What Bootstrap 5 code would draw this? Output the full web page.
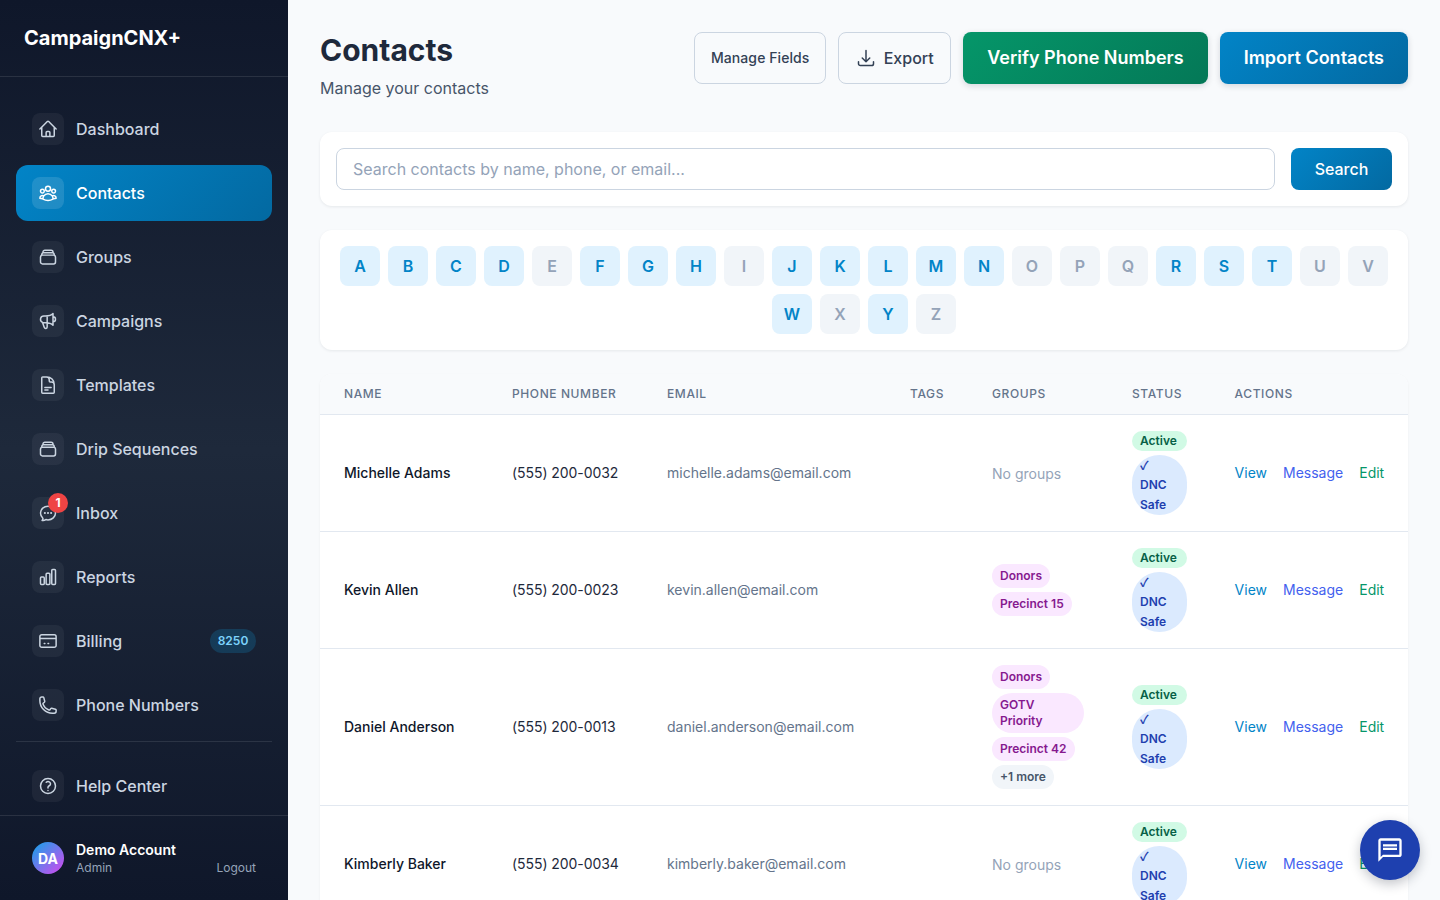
<!doctype html>
<html lang="en">
<head>
<meta charset="utf-8">
<title>Contacts</title>
<link rel="stylesheet" href="https://cdn.jsdelivr.net/npm/bootstrap@5.3.0/dist/css/bootstrap.min.css">
<style>
html,body{height:100%;overflow:hidden}
body{font-family:Inter,"Liberation Sans",sans-serif;background:#f8fafc;color:#0f172a}
.shell{height:100vh}
.side{width:288px;flex:none;height:100vh;background:linear-gradient(180deg,#0f172a 0%,#1e293b 50%,#0f172a 100%)}
.brand{height:77px;padding:0 24px;border-bottom:1px solid rgba(255,255,255,.1);font-size:20px;font-weight:700;color:#fff;line-height:76px;flex:none}
.sidenav{padding:24px 16px 0;flex:none}
.sitem{height:56px;margin-bottom:8px;padding:12px 16px;border-radius:12px;color:#cbd5e1;font-size:16px;font-weight:500;text-decoration:none;gap:12px}
.sitem:hover{color:#cbd5e1}
.sitem:last-child{margin-bottom:0}
.sitem.on{color:#fff;background:linear-gradient(135deg,#0284c7,#0369a1)}
.sico{width:32px;height:32px;border-radius:8px;background:rgba(255,255,255,.05);flex:none}
.on .sico{background:rgba(255,255,255,.12)}
.sico svg{width:20px;height:20px;fill:none;stroke:#cbd5e1;stroke-width:1.8;stroke-linecap:round;stroke-linejoin:round}
.on .sico svg{stroke:#fff}
.redot{top:-4px;right:-4px;width:20px;height:20px;border-radius:50%;background:#ef4444;color:#fff;font-size:12px;font-weight:700;line-height:20px;text-align:center}
.credit{width:46px;height:24px;border-radius:12px;background:rgba(14,165,233,.2);color:#7dd3fc;font-size:12px;font-weight:600;line-height:24px;text-align:center;flex:none}
.sdiv{height:1px;background:rgba(255,255,255,.1);margin-bottom:16px}
.sfoot{height:85px;flex:none;border-top:1px solid rgba(255,255,255,.1);padding:0 32px;gap:12px}
.avatar{width:32px;height:32px;border-radius:50%;background:linear-gradient(135deg,#0ea5e9,#d946ef);color:#fff;font-size:14px;font-weight:700;flex:none}
.uwrap{padding-top:2px}
.uname{font-size:14px;font-weight:600;color:#fff;line-height:18px}
.urole{font-size:12px;color:#94a3b8;line-height:18px}
.logout{font-size:12px;color:#94a3b8;text-decoration:none;line-height:18px;margin-top:20px}
.mainpane{height:100vh;overflow:hidden;padding:32px;min-width:0}
.pagehead{margin-bottom:48px;height:52px}
.pagehead h1{font-size:30px;font-weight:700;color:#1e293b;line-height:36px;margin:0 0 8px}
.pagehead p{font-size:16px;color:#475569;line-height:24px;margin:0}
.hgap{gap:12px}
.bt{height:52px;border-radius:8px;padding:0 24px 2px;font-weight:600;font-size:18px;border:0;color:#fff;white-space:nowrap}
.bt:hover{color:#fff}
.bt-blue{background:linear-gradient(135deg,#0284c7,#0369a1);box-shadow:0 2px 6px rgba(15,23,42,.15)}
.bt-green{background:linear-gradient(135deg,#059669,#047857);box-shadow:0 2px 6px rgba(15,23,42,.15)}
.bt-line{background:transparent;border:1px solid #cbd5e1;color:#334155;padding:0 16px;font-weight:500;font-size:16px}
.bt-line:hover{color:#334155}
.bt-sm14{font-size:14px;width:132px;letter-spacing:.08px;padding:0 0 2px}
.bt-exp{width:113px;padding:0}
.bt-line svg{width:20px;height:20px;fill:none;stroke:#334155;stroke-width:1.8;stroke-linecap:round;stroke-linejoin:round}
.panel{background:#fff;border-radius:12px;box-shadow:0 1px 3px rgba(15,23,42,.08);padding:16px}
.searchbox{height:42px;border:1px solid #cbd5e1;border-radius:8px;font-size:16px;padding:0 16px;color:#0f172a}
.searchbox::placeholder{color:#94a3b8}
.bt-search{height:42px;font-size:16px;font-weight:500;width:101px;padding:0;flex:none;box-shadow:none}
.alpha{margin-top:24px}
.ltr{width:40px;height:40px;border-radius:8px;font-size:16px;font-weight:600;background:#e0f2fe;color:#0284c7;text-decoration:none}
.ltr:hover{color:#0284c7}
.ltr.off{background:#f1f5f9;color:#94a3b8}
.tblcard{margin-top:24px;padding:0;background:#fff;border-radius:12px;box-shadow:0 1px 3px rgba(15,23,42,.05)}
.ctable{table-layout:fixed;width:1088px;margin:0;font-size:14px}
.ctable>thead>tr>th{height:40px;padding:0 24px;background:#f8fafc;border-bottom:1px solid #e2e8f0;font-size:12px;font-weight:500;letter-spacing:.6px;text-transform:uppercase;color:#64748b;vertical-align:middle;white-space:nowrap}
.ctable>thead>tr>th:first-child{border-top-left-radius:12px}
.ctable>thead>tr>th:last-child{border-top-right-radius:12px}
.ctable>tbody>tr>td{padding:16px 24px;border-bottom:1px solid #e2e8f0;vertical-align:middle;color:#334155;background:transparent}
.c1{width:168px}.c2{width:155px}.c3{width:243px}.c4{width:82px}.c5{width:140px}.c6{width:102.6px}.c7{width:197.4px}
.ctable>tbody>tr>td.nm{color:#0f172a;font-weight:500}
.ctable>tbody>tr>td.ph{color:#1e293b;white-space:nowrap;letter-spacing:-.06px}
.ctable>tbody>tr>td.em{color:#64748b}
.none{color:#94a3b8;display:block;padding-top:2px}
.pill{border-radius:9999px;font-size:12px;font-weight:600;padding:0 8px;display:block}
.p-act{background:#d1fae5;color:#065f46;line-height:20px}
.p-dnc{background:#dbeafe;color:#1e40af;line-height:20px}
.tick{display:block;height:20px;font-family:"Noto Sans CJK JP",sans-serif;font-weight:700;line-height:20px}
.p-grp{background:#fae8ff;color:#86198f;line-height:16px;padding:4px 8px;width:fit-content}
.p-more{background:#f1f5f9;color:#475569;line-height:16px;padding:4px 8px;width:fit-content}
.stack{display:flex;flex-direction:column;gap:4px}
.acts{gap:16px;white-space:nowrap}
.acts a{text-decoration:none}
.a-view{color:#0284c7}.a-msg{color:#4361ee}.a-edit{color:#059669}
.fab{right:20px;bottom:20px;width:60px;height:60px;border-radius:50%;background:#1e40af;box-shadow:0 4px 12px rgba(15,23,42,.25);border:0}
.fab svg{width:28px;height:28px;fill:#fff}
</style>
</head>
<body>
<div class="shell d-flex">
  <aside class="side d-flex flex-column">
    <div class="brand">CampaignCNX+</div>
    <nav class="sidenav">
      <a href="#" class="sitem d-flex align-items-center"><span class="sico d-flex align-items-center justify-content-center"><svg viewBox="0 0 24 24"><path d="M2.25 12l8.954-8.955c.44-.439 1.152-.439 1.591 0L21.75 12M4.5 9.75v10.125c0 .621.504 1.125 1.125 1.125H9.75v-4.875c0-.621.504-1.125 1.125-1.125h2.25c.621 0 1.125.504 1.125 1.125V21h4.125c.621 0 1.125-.504 1.125-1.125V9.75M8.25 21h8.25"/></svg></span>Dashboard</a>
      <a href="#" class="sitem on d-flex align-items-center"><span class="sico d-flex align-items-center justify-content-center"><svg viewBox="0 0 24 24"><path d="M18 18.72a9.094 9.094 0 003.741-.479 3 3 0 00-4.682-2.72m.94 3.198l.001.031c0 .225-.012.447-.037.666A11.944 11.944 0 0112 21c-2.17 0-4.207-.576-5.963-1.584A6.062 6.062 0 016 18.719m12 0a5.971 5.971 0 00-.941-3.197m0 0A5.995 5.995 0 0012 12.75a5.995 5.995 0 00-5.058 2.772m0 0a3 3 0 00-4.681 2.72 8.986 8.986 0 003.74.477m.94-3.197a5.971 5.971 0 00-.94 3.197M15 6.75a3 3 0 11-6 0 3 3 0 016 0zm6 3a2.25 2.25 0 11-4.5 0 2.25 2.25 0 014.5 0zm-13.5 0a2.25 2.25 0 11-4.5 0 2.25 2.25 0 014.5 0z"/></svg></span>Contacts</a>
      <a href="#" class="sitem d-flex align-items-center"><span class="sico d-flex align-items-center justify-content-center"><svg viewBox="0 0 24 24"><path d="M6 6.878V6a2.25 2.25 0 012.25-2.25h7.5A2.25 2.25 0 0118 6v.878m-12 0c.235-.083.487-.128.75-.128h10.5c.263 0 .515.045.75.128m-12 0A2.25 2.25 0 004.5 9v.878m13.5-3A2.25 2.25 0 0119.5 9v.878m0 0a2.246 2.246 0 00-.75-.128H5.25c-.263 0-.515.045-.75.128m15 0A2.25 2.25 0 0121 12v6a2.25 2.25 0 01-2.25 2.25H5.25A2.25 2.25 0 013 18v-6c0-.98.626-1.813 1.5-2.122"/></svg></span>Groups</a>
      <a href="#" class="sitem d-flex align-items-center"><span class="sico d-flex align-items-center justify-content-center"><svg viewBox="0 0 24 24"><path d="M11 5.882V19.24a1.76 1.76 0 01-3.417.592l-2.147-6.15M18 13a3 3 0 100-6M5.436 13.683A4.001 4.001 0 017 6h1.832c4.1 0 7.625-1.234 9.168-3v14c-1.543-1.766-5.067-3-9.168-3H7a3.988 3.988 0 00-1.564.317z"/></svg></span>Campaigns</a>
      <a href="#" class="sitem d-flex align-items-center"><span class="sico d-flex align-items-center justify-content-center"><svg viewBox="0 0 24 24"><path d="M19.5 14.25v-2.625a3.375 3.375 0 00-3.375-3.375h-1.5A1.125 1.125 0 0113.5 7.125v-1.5a3.375 3.375 0 00-3.375-3.375H8.25m0 12.75h7.5m-7.5 3H12M10.5 2.25H5.625c-.621 0-1.125.504-1.125 1.125v17.25c0 .621.504 1.125 1.125 1.125h12.75c.621 0 1.125-.504 1.125-1.125V11.25a9 9 0 00-9-9z"/></svg></span>Templates</a>
      <a href="#" class="sitem d-flex align-items-center"><span class="sico d-flex align-items-center justify-content-center"><svg viewBox="0 0 24 24"><path d="M6 6.878V6a2.25 2.25 0 012.25-2.25h7.5A2.25 2.25 0 0118 6v.878m-12 0c.235-.083.487-.128.75-.128h10.5c.263 0 .515.045.75.128m-12 0A2.25 2.25 0 004.5 9v.878m13.5-3A2.25 2.25 0 0119.5 9v.878m0 0a2.246 2.246 0 00-.75-.128H5.25c-.263 0-.515.045-.75.128m15 0A2.25 2.25 0 0121 12v6a2.25 2.25 0 01-2.25 2.25H5.25A2.25 2.25 0 013 18v-6c0-.98.626-1.813 1.5-2.122"/></svg></span>Drip Sequences</a>
      <a href="#" class="sitem d-flex align-items-center"><span class="sico position-relative d-flex align-items-center justify-content-center"><svg viewBox="0 0 24 24"><path d="M8.625 12a.375.375 0 11-.75 0 .375.375 0 01.75 0zm0 0H8.25m4.125 0a.375.375 0 11-.75 0 .375.375 0 01.75 0zm0 0H12m4.125 0a.375.375 0 11-.75 0 .375.375 0 01.75 0zm0 0h-.375M21 12c0 4.556-4.03 8.25-9 8.25a9.764 9.764 0 01-2.555-.337A5.972 5.972 0 015.41 20.97a5.969 5.969 0 01-.474-.065 4.48 4.48 0 00.978-2.025c.09-.457-.133-.901-.467-1.226C3.93 16.178 3 14.189 3 12c0-4.556 4.03-8.25 9-8.25s9 3.694 9 8.25z"/></svg><span class="redot position-absolute">1</span></span>Inbox</a>
      <a href="#" class="sitem d-flex align-items-center"><span class="sico d-flex align-items-center justify-content-center"><svg viewBox="0 0 24 24"><path d="M3 13.125C3 12.504 3.504 12 4.125 12h2.25c.621 0 1.125.504 1.125 1.125v6.75C7.5 20.496 6.996 21 6.375 21h-2.25A1.125 1.125 0 013 19.875v-6.75zM9.75 8.625c0-.621.504-1.125 1.125-1.125h2.25c.621 0 1.125.504 1.125 1.125v11.25c0 .621-.504 1.125-1.125 1.125h-2.25a1.125 1.125 0 01-1.125-1.125V8.625zM16.5 4.125c0-.621.504-1.125 1.125-1.125h2.25C20.496 3 21 3.504 21 4.125v15.75c0 .621-.504 1.125-1.125 1.125h-2.25a1.125 1.125 0 01-1.125-1.125V4.125z"/></svg></span>Reports</a>
      <a href="#" class="sitem d-flex align-items-center"><span class="sico d-flex align-items-center justify-content-center"><svg viewBox="0 0 24 24"><path d="M2.25 9h19.5M7.5 15h.75M12 15h.75M4.5 19.5h15a2.25 2.25 0 002.25-2.25V6.75A2.25 2.25 0 0019.5 4.5h-15a2.25 2.25 0 00-2.25 2.25v10.5A2.25 2.25 0 004.5 19.5z"/></svg></span><span class="flex-grow-1">Billing</span><span class="credit">8250</span></a>
      <a href="#" class="sitem d-flex align-items-center"><span class="sico d-flex align-items-center justify-content-center"><svg viewBox="0 0 24 24"><path d="M2.25 6.75c0 8.284 6.716 15 15 15h2.25a2.25 2.25 0 002.25-2.25v-1.372c0-.516-.351-.966-.852-1.091l-4.423-1.106c-.44-.11-.902.055-1.173.417l-.97 1.293c-.282.376-.769.542-1.21.38a12.035 12.035 0 01-7.143-7.143c-.162-.441.004-.928.38-1.21l1.293-.97c.363-.271.527-.734.417-1.173L6.963 3.102a1.125 1.125 0 00-1.091-.852H4.5A2.25 2.25 0 002.25 4.5v2.25z"/></svg></span>Phone Numbers</a>
      <div class="sdiv"></div>
      <a href="#" class="sitem d-flex align-items-center"><span class="sico d-flex align-items-center justify-content-center"><svg viewBox="0 0 24 24"><path d="M9.879 7.519c1.171-1.025 3.071-1.025 4.242 0 1.172 1.025 1.172 2.687 0 3.712-.203.179-.43.326-.67.442-.745.361-1.45.999-1.45 1.827v.75M21 12a9 9 0 11-18 0 9 9 0 0118 0zm-9 5.25h.008v.008H12v-.008z"/></svg></span>Help Center</a>
    </nav>
    <div class="sfoot mt-auto d-flex align-items-center">
      <span class="avatar d-flex align-items-center justify-content-center">DA</span>
      <div class="flex-grow-1 uwrap"><div class="uname">Demo Account</div><div class="urole">Admin</div></div>
      <a href="#" class="logout">Logout</a>
    </div>
  </aside>
  <main class="mainpane flex-grow-1">
    <header class="pagehead d-flex justify-content-between align-items-start">
      <div><h1>Contacts</h1><p>Manage your contacts</p></div>
      <div class="d-flex hgap">
        <button class="btn bt bt-line bt-sm14">Manage Fields</button>
        <button class="btn bt bt-line bt-exp d-flex align-items-center justify-content-center gap-2"><svg viewBox="0 0 24 24"><path d="M3 16.5v2.25A2.25 2.25 0 005.25 21h13.5A2.25 2.25 0 0021 18.75V16.5M16.5 12L12 16.5m0 0L7.5 12m4.5 4.5V3"/></svg>Export</button>
        <button class="btn bt bt-green">Verify Phone Numbers</button>
        <button class="btn bt bt-blue">Import Contacts</button>
      </div>
    </header>
    <section class="panel d-flex gap-3">
      <input class="form-control searchbox flex-grow-1" type="text" placeholder="Search contacts by name, phone, or email...">
      <button class="btn bt bt-blue bt-search">Search</button>
    </section>
    <section class="panel alpha d-flex flex-wrap justify-content-center gap-2">
      <a class="ltr d-flex align-items-center justify-content-center" href="#">A</a>
      <a class="ltr d-flex align-items-center justify-content-center" href="#">B</a>
      <a class="ltr d-flex align-items-center justify-content-center" href="#">C</a>
      <a class="ltr d-flex align-items-center justify-content-center" href="#">D</a>
      <a class="ltr off d-flex align-items-center justify-content-center" href="#">E</a>
      <a class="ltr d-flex align-items-center justify-content-center" href="#">F</a>
      <a class="ltr d-flex align-items-center justify-content-center" href="#">G</a>
      <a class="ltr d-flex align-items-center justify-content-center" href="#">H</a>
      <a class="ltr off d-flex align-items-center justify-content-center" href="#">I</a>
      <a class="ltr d-flex align-items-center justify-content-center" href="#">J</a>
      <a class="ltr d-flex align-items-center justify-content-center" href="#">K</a>
      <a class="ltr d-flex align-items-center justify-content-center" href="#">L</a>
      <a class="ltr d-flex align-items-center justify-content-center" href="#">M</a>
      <a class="ltr d-flex align-items-center justify-content-center" href="#">N</a>
      <a class="ltr off d-flex align-items-center justify-content-center" href="#">O</a>
      <a class="ltr off d-flex align-items-center justify-content-center" href="#">P</a>
      <a class="ltr off d-flex align-items-center justify-content-center" href="#">Q</a>
      <a class="ltr d-flex align-items-center justify-content-center" href="#">R</a>
      <a class="ltr d-flex align-items-center justify-content-center" href="#">S</a>
      <a class="ltr d-flex align-items-center justify-content-center" href="#">T</a>
      <a class="ltr off d-flex align-items-center justify-content-center" href="#">U</a>
      <a class="ltr off d-flex align-items-center justify-content-center" href="#">V</a>
      <a class="ltr d-flex align-items-center justify-content-center" href="#">W</a>
      <a class="ltr off d-flex align-items-center justify-content-center" href="#">X</a>
      <a class="ltr d-flex align-items-center justify-content-center" href="#">Y</a>
      <a class="ltr off d-flex align-items-center justify-content-center" href="#">Z</a>
    </section>
    <section class="tblcard">
      <table class="table ctable">
        <colgroup><col class="c1"><col class="c2"><col class="c3"><col class="c4"><col class="c5"><col class="c6"><col class="c7"></colgroup>
        <thead><tr><th>Name</th><th>Phone Number</th><th>Email</th><th>Tags</th><th>Groups</th><th>Status</th><th>Actions</th></tr></thead>
        <tbody>
          <tr><td class="nm">Michelle Adams</td><td class="ph">(555) 200-0032</td><td class="em">michelle.adams@email.com</td><td></td><td><span class="none">No groups</span></td>
            <td><div class="stack"><span class="pill p-act">Active</span><span class="pill p-dnc"><span class="tick">✓</span> DNC Safe</span></div></td>
            <td><div class="acts d-flex"><a class="a-view" href="#">View</a><a class="a-msg" href="#">Message</a><a class="a-edit" href="#">Edit</a></div></td></tr>
          <tr><td class="nm">Kevin Allen</td><td class="ph">(555) 200-0023</td><td class="em">kevin.allen@email.com</td><td></td><td><div class="stack"><span class="pill p-grp">Donors</span><span class="pill p-grp">Precinct 15</span></div></td>
            <td><div class="stack"><span class="pill p-act">Active</span><span class="pill p-dnc"><span class="tick">✓</span> DNC Safe</span></div></td>
            <td><div class="acts d-flex"><a class="a-view" href="#">View</a><a class="a-msg" href="#">Message</a><a class="a-edit" href="#">Edit</a></div></td></tr>
          <tr><td class="nm">Daniel Anderson</td><td class="ph">(555) 200-0013</td><td class="em">daniel.anderson@email.com</td><td></td><td><div class="stack"><span class="pill p-grp">Donors</span><span class="pill p-grp gotv">GOTV Priority</span><span class="pill p-grp">Precinct 42</span><span class="pill p-more">+1 more</span></div></td>
            <td><div class="stack"><span class="pill p-act">Active</span><span class="pill p-dnc"><span class="tick">✓</span> DNC Safe</span></div></td>
            <td><div class="acts d-flex"><a class="a-view" href="#">View</a><a class="a-msg" href="#">Message</a><a class="a-edit" href="#">Edit</a></div></td></tr>
          <tr><td class="nm">Kimberly Baker</td><td class="ph">(555) 200-0034</td><td class="em">kimberly.baker@email.com</td><td></td><td><span class="none">No groups</span></td>
            <td><div class="stack"><span class="pill p-act">Active</span><span class="pill p-dnc"><span class="tick">✓</span> DNC Safe</span></div></td>
            <td><div class="acts d-flex"><a class="a-view" href="#">View</a><a class="a-msg" href="#">Message</a><a class="a-edit" href="#">Edit</a></div></td></tr>
        </tbody>
      </table>
    </section>
  </main>
</div>
<button class="fab position-fixed d-flex align-items-center justify-content-center" aria-label="Chat"><svg viewBox="0 0 24 24"><path d="M20 2H4c-1.1 0-2 .9-2 2v18l4-4h14c1.1 0 2-.9 2-2V4c0-1.1-.9-2-2-2zm0 14H6l-2 2V4h16v12zM6 7h12v2H6zM6 10h12v2H6z"/></svg></button>
<script src="https://cdn.jsdelivr.net/npm/bootstrap@5.3.0/dist/js/bootstrap.bundle.min.js"></script>
</body>
</html>
